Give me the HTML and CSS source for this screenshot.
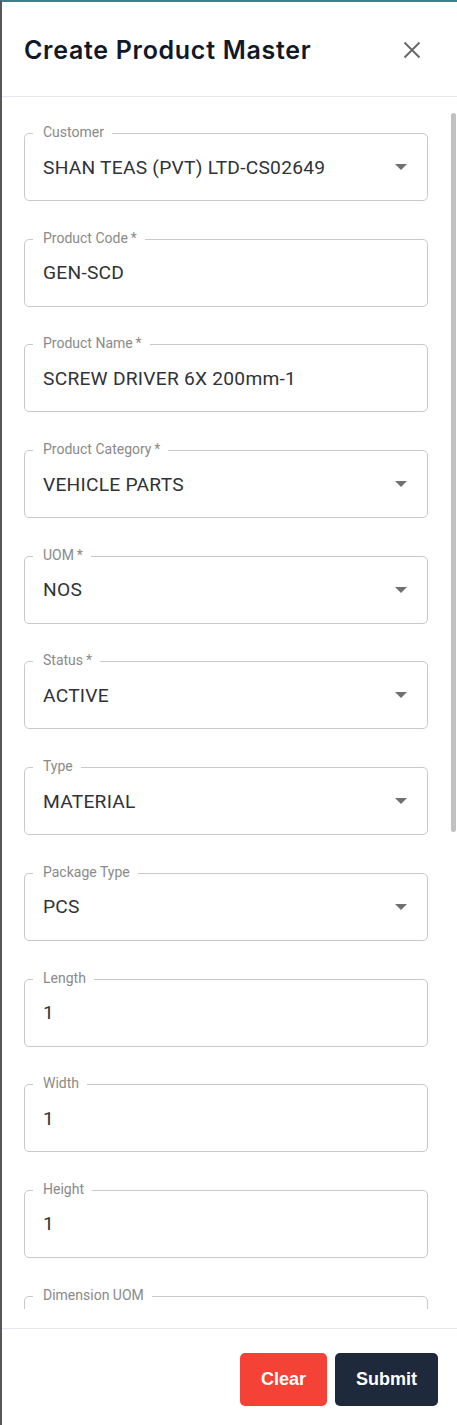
FILE: index.html
```
<!DOCTYPE html>
<html lang="en">
<head>
<meta charset="utf-8">
<title>Create Product Master</title>
<link rel="stylesheet" href="styles.css">
</head>
<body>
<div class="drawer">
  <header class="drawer-header">
    <h1 class="title">Create Product Master</h1>
    <button class="close-btn" aria-label="Close">
      <svg width="18" height="18" viewBox="0 0 18 18"><path d="M1.5 1.5 16.5 16.5M16.5 1.5 1.5 16.5" stroke="currentColor" stroke-width="2" fill="none"/></svg>
    </button>
  </header>
  <div class="drawer-body">
    <form class="form">
      <div class="field select"><span class="label">Customer</span><span class="value">SHAN TEAS (PVT) LTD-CS02649</span><svg class="arrow" width="12" height="6" viewBox="7 10 10 5"><path d="M7 10l5 5 5-5z" fill="currentColor"/></svg></div>
      <div class="field"><span class="label">Product Code&thinsp;*</span><span class="value">GEN-SCD</span></div>
      <div class="field"><span class="label">Product Name&thinsp;*</span><span class="value">SCREW DRIVER 6X 200mm-1</span></div>
      <div class="field select"><span class="label">Product Category&thinsp;*</span><span class="value">VEHICLE PARTS</span><svg class="arrow" width="12" height="6" viewBox="7 10 10 5"><path d="M7 10l5 5 5-5z" fill="currentColor"/></svg></div>
      <div class="field select"><span class="label">UOM&thinsp;*</span><span class="value">NOS</span><svg class="arrow" width="12" height="6" viewBox="7 10 10 5"><path d="M7 10l5 5 5-5z" fill="currentColor"/></svg></div>
      <div class="field select"><span class="label">Status&thinsp;*</span><span class="value">ACTIVE</span><svg class="arrow" width="12" height="6" viewBox="7 10 10 5"><path d="M7 10l5 5 5-5z" fill="currentColor"/></svg></div>
      <div class="field select"><span class="label">Type</span><span class="value">MATERIAL</span><svg class="arrow" width="12" height="6" viewBox="7 10 10 5"><path d="M7 10l5 5 5-5z" fill="currentColor"/></svg></div>
      <div class="field select"><span class="label">Package Type</span><span class="value">PCS</span><svg class="arrow" width="12" height="6" viewBox="7 10 10 5"><path d="M7 10l5 5 5-5z" fill="currentColor"/></svg></div>
      <div class="field"><span class="label">Length</span><span class="value">1</span></div>
      <div class="field"><span class="label">Width</span><span class="value">1</span></div>
      <div class="field"><span class="label">Height</span><span class="value">1</span></div>
      <div class="field select"><span class="label">Dimension UOM</span><span class="value"></span><svg class="arrow" width="12" height="6" viewBox="7 10 10 5"><path d="M7 10l5 5 5-5z" fill="currentColor"/></svg></div>
    </form>
    <div class="scrollbar"><div class="thumb"></div></div>
  </div>
  <footer class="drawer-footer">
    <button class="btn btn-clear" type="button">Clear</button>
    <button class="btn btn-submit" type="button">Submit</button>
  </footer>
</div>
</body>
</html>
```
FILE: styles.css
```
* { box-sizing: border-box; }
html, body { margin: 0; padding: 0; background: #fff; }
body { width: 457px; height: 1425px; overflow: hidden; font-family: Roboto, "Liberation Sans", sans-serif; }

.drawer {
  height: 1425px;
  display: flex;
  flex-direction: column;
  border-top: 2px solid #3e8088;
  border-left: 2px solid #585858;
  background: #fff;
}

.drawer-header {
  height: 95px;
  flex: none;
  display: flex;
  align-items: center;
  justify-content: space-between;
  padding: 1px 36px 0 22px;
  border-bottom: 1px solid #e3e8f0;
}
.title {
  margin: 0;
  font-family: Inter, "Noto Sans", sans-serif;
  font-weight: 600;
  font-size: 25px;
  letter-spacing: 0.7px;
  color: #111827;
}
.close-btn {
  border: 0;
  background: none;
  padding: 0;
  width: 18px;
  height: 18px;
  color: #6b6b6b;
  display: flex;
}

.drawer-body {
  height: 1212px;
  flex: none;
  display: flex;
  overflow: hidden;
  margin-bottom: 19px;
}
.form {
  flex: 1;
  display: flex;
  flex-direction: column;
  gap: 37.7px;
  padding: 36px 22px 0 22px;
  overflow: hidden;
  margin: 0;
}
.scrollbar {
  width: 7px;
  flex: none;
}
.thumb {
  margin: 16px 1px 0 1px;
  width: 5px;
  height: 719px;
  background: #c1c1c1;
  border-radius: 3px;
}

.field {
  position: relative;
  flex: none;
  height: 68px;
  border: 1px solid #c9c9c9;
  border-radius: 5px;
  display: flex;
  align-items: center;
  padding: 0 20px 0 18px;
}
.label {
  position: absolute;
  top: -10px;
  left: 8px;
  padding: 0 8px 0 10px;
  background: #fff;
  font-size: 14px;
  line-height: 16px;
  color: #8a8a8a;
}
.value {
  flex: 1;
  font-size: 19.2px;
  letter-spacing: 0.25px;
  color: #2f3338;
  white-space: nowrap;
}
.arrow {
  color: #707070;
  flex: none;
}

.drawer-footer {
  flex: 1;
  border-top: 1px solid #e3e8f0;
  display: flex;
  justify-content: flex-end;
  align-items: flex-start;
  gap: 8px;
  padding: 24px 19px 0 0;
}
.btn {
  height: 53px;
  border: 0;
  border-radius: 5px;
  color: #fff;
  font-family: "Liberation Sans", Arial, sans-serif;
  font-weight: 700;
  font-size: 18px;
  padding: 0;
}
.btn-clear { width: 87px; background: #f44336; }
.btn-submit { width: 103px; background: #1e293b; }
```
